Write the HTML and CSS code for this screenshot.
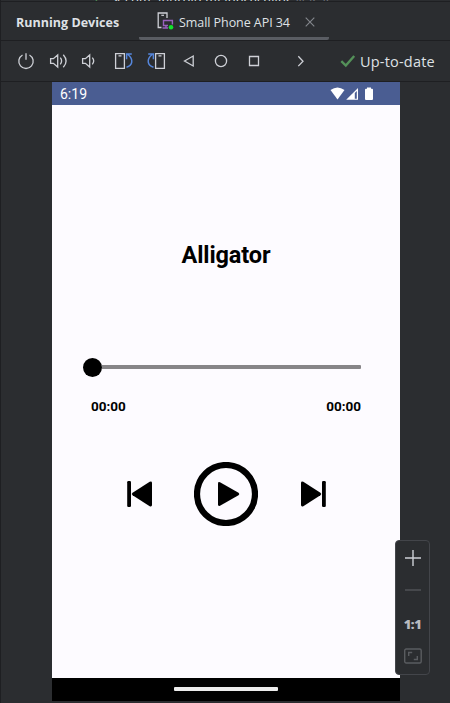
FILE: index.html
```html
<!DOCTYPE html>
<html lang="en">
<head>
<meta charset="utf-8">
<title>Running Devices</title>
<link rel="stylesheet" href="styles.css">
</head>
<body>
<div class="window">
  <div class="editor-strip"><span class="check">✓</span><span class="path">↗ com.android.mlappsecnlibs</span> <span class="dim">Nasar.</span></div>
  <header class="tabs">
    <h1 class="title">Running Devices</h1>
    <div class="tab">
      <svg class="device-icon" width="17" height="19" viewBox="0 0 17 19" fill="none">
        <path d="M4.5 15.5H1.2V1H10V6" stroke="#ced0d6" stroke-width="1.3"/>
        <path d="M4.3 3.3h2.7" stroke="#ced0d6" stroke-width="1.2"/>
        <path d="M11 13.5H6.5V8.5h8.9v4M5.5 16H11M9 13.5V16" stroke="#9961bd" stroke-width="1.4"/>
        <circle cx="14" cy="15.3" r="2.3" fill="#12e32c"/>
      </svg>
      <span class="tab-name">Small Phone API 34</span>
      <svg class="close" width="10" height="10" viewBox="0 0 10 10"><path d="M.7.7l8.6 8.6M9.3.7L.7 9.3" stroke="#84878d" stroke-width="1.1"/></svg>
    </div>
  </header>
  <nav class="toolbar">
    <svg class="tools" width="310" height="24" viewBox="0 49 310 24" fill="none" stroke="#ced0d6" stroke-width="1.3">
      <path d="M26 53.3v6.4M22.5 55a7.2 7.2 0 1 0 7 0"/>
      <path d="M50.6 58.7h2.8l4.3-3.7v12l-4.3-3.7h-2.8zM60.3 57.7q2.6 3.3 0 6.6M63.3 54.7q5.6 6.3 0 12.6"/>
      <path d="M82.6 58.7h2.8l4.3-3.7v12l-4.3-3.7h-2.8zM92.3 57.7q2.8 3.3 0 6.6"/>
      <path d="M115.6 53.7h8.8v14.6h-8.8zM118.5 55.8h3"/>
      <path d="M126.5 67.3c6-1.7 7.5-7.8 1.4-12.8M131.8 54h-5.2v5.2" stroke="#5586dc" stroke-width="1.5"/>
      <path d="M155.6 53.7h8.8v14.6h-8.8zM158.5 55.8h3"/>
      <path d="M153.5 67.3c-6-1.7-7.5-7.8-1.4-12.8M148.2 54h5.2v5.2" stroke="#5586dc" stroke-width="1.5"/>
      <path d="M184.5 61l8.7-5v10z"/>
      <circle cx="221" cy="61" r="5.6"/>
      <path d="M249.5 56.5h9v9h-9z"/>
      <path d="M298.3 56.3l4.7 4.9-4.7 4.9"/>
    </svg>
    <div class="status">
      <svg width="16" height="14" viewBox="0 0 16 14"><path d="M1.3 7.2l4.5 4.3L14.2 2" fill="none" stroke="#549159" stroke-width="2.4"/></svg>
      <span class="status-text">Up-to-date</span>
    </div>
  </nav>
  <main class="stage">
    <section class="phone">
      <div class="statusbar">
        <span class="clock">6:19</span>
        <svg width="44" height="14" viewBox="330 87 44 14" fill="#fff">
          <path d="M330.5 90q7-5 14 0L337.5 99.5z"/>
          <path d="M346.2 99.8L358 88v11.8z"/><path d="M354.8 93l2-2v7.7h-2z" fill="#4a5d92"/>
          <path d="M366 88.7h1v-1.2h4v1.2h1q1 0 1 1v9.3q0 1-1 1h-6q-1 0-1-1v-9.3q0-1 1-1z"/>
        </svg>
      </div>
      <div class="player">
        <h2 class="song">Alligator</h2>
        <div class="seek"><div class="thumb"></div><div class="track"></div></div>
        <div class="times"><span>00:00</span><span>00:00</span></div>
        <div class="controls">
          <svg width="26" height="26" viewBox="0 0 26 26"><rect x=".2" y="0" width="3.8" height="26" rx="1.2"/><path d="M5.6 11.7L22.7.8Q25 0 25 2v22q0 2-2.3 1.2L5.6 14.3Q3.8 13 5.6 11.7z"/></svg>
          <svg class="play" width="64" height="64" viewBox="0 0 64 64"><circle cx="32" cy="32" r="29" fill="none" stroke="#000" stroke-width="6.2"/><path d="M24 21.5q0-2 2-1.2L44.5 30.8q1.7 1.2 0 2.4L26 43.7q-2 .8-2-1.2z"/></svg>
          <svg width="26" height="26" viewBox="0 0 26 26"><rect x="22" y="0" width="3.8" height="26" rx="1.2"/><path d="M20.4 11.7L3.3.8Q1 0 1 2v22q0 2 2.3 1.2L20.4 14.3Q22.2 13 20.4 11.7z"/></svg>
        </div>
      </div>
      <div class="navbar"><div class="handle"></div></div>
    </section>
  </main>
  <aside class="zoom">
    <svg width="18" height="18" viewBox="0 0 18 18"><path d="M9 1v16M1 9h16" stroke="#ced0d6" stroke-width="1.4"/></svg>
    <svg class="minus" width="18" height="2" viewBox="0 0 18 2"><path d="M1 1h16" stroke="#5a5c60" stroke-width="1.2"/></svg>
    <span class="ratio">1:1</span>
    <svg class="fit" width="18" height="16" viewBox="0 0 18 16" fill="none" stroke="#5a5c60" stroke-width="1.4"><rect x=".7" y="1" width="16.5" height="14" rx="1.5"/><path d="M4.7 8V4.5H8.2M9.8 11.5h3.5V8"/></svg>
  </aside>
</div>
</body>
</html>
```
FILE: styles.css
```css
* { box-sizing: border-box; }
body { margin: 0; background: #2b2d30; color: #dfe1e5; font-family: "Open Sans", "Noto Sans", sans-serif; }
svg { display: block; flex: none; }
.window { position: relative; width: 450px; height: 703px; overflow: hidden; display: flex; flex-direction: column; border-left: 1px solid #1e1f22; }
.editor-strip { height: 2px; flex: none; overflow: hidden; padding-left: 90px; font-size: 12.5px; line-height: 1px; letter-spacing: .25px; white-space: pre; border-bottom: 1px solid #1e1f22; }
.check { color: #549159; margin-right: 8px; }
.dim { color: #6f737a; }
.tabs { height: 39px; flex: none; display: flex; border-bottom: 1px solid #1e1f22; }
.title { margin: 0; width: 138px; padding-left: 15px; font-size: 12.5px; line-height: 41px; letter-spacing: .02px; font-weight: 700; white-space: nowrap; }
.tab { width: 190px; display: flex; align-items: center; padding-left: 18px; background: linear-gradient(#5a5d63, #5a5d63) 0 35px / 100% 4px no-repeat; border-radius: 0 0 2px 2px; }
.device-icon { margin-top: 1px; }
.tab-name { width: 112px; margin: 3px 0 0 5px; font-size: 12.5px; letter-spacing: -.06px; white-space: nowrap; }
.close { margin: 2px 0 0 14px; }
.toolbar { height: 41px; flex: none; display: flex; align-items: center; border-bottom: 1px solid #1e1f22; }
.tools { margin-left: -1px; }
.status { display: flex; align-items: center; margin-left: 30px; gap: 4px; }
.status-text { font-size: 14.5px; letter-spacing: .2px; white-space: nowrap; }
.stage { height: 619px; flex: none; padding-left: 51px; }
.phone { width: 348px; height: 619px; display: flex; flex-direction: column; background: #fdfbff; color: #000; font-family: Roboto, sans-serif; }
.statusbar { height: 23px; flex: none; display: flex; align-items: center; justify-content: space-between; padding: 1px 26px 0 8px; background: #4a5d92; color: #fff; }
.clock { font-size: 14px; }
.player { height: 573px; flex: none; }
.song { margin: 0; padding-top: 136px; font-size: 23.5px; line-height: 28px; font-weight: 700; text-align: center; letter-spacing: -.1px; }
.seek { display: flex; align-items: center; height: 20px; margin: 88px 39px 0 31px; }
.thumb { width: 19px; height: 19px; border-radius: 50%; background: #000; }
.track { flex: 1; height: 4px; background: #878588; border-radius: 0 1px 1px 0; }
.times { display: flex; justify-content: space-between; padding: 20px 39px 0 39px; font-size: 13.5px; line-height: 19px; font-weight: 700; }
.controls { display: flex; align-items: center; justify-content: space-between; padding: 46px 74px 0 75px; }
.play { margin-right: 1px; }
.navbar { height: 23px; flex: none; display: flex; justify-content: center; padding-top: 9px; background: #000; }
.handle { width: 104px; height: 4px; background: #ececec; border-radius: 1px; }
.zoom { position: absolute; left: 394px; top: 540px; width: 35px; height: 135px; display: flex; flex-direction: column; align-items: center; padding: 8px 0 0 0; border: 1px solid #43454a; border-radius: 4px; background: #2b2d30; }
.minus { margin-top: 22px; }
.ratio { margin-top: 22px; font: 800 13px/22px "Open Sans", sans-serif; letter-spacing: -.5px; color: #b9bbc0; }
.fit { margin-top: 13px; }
```
